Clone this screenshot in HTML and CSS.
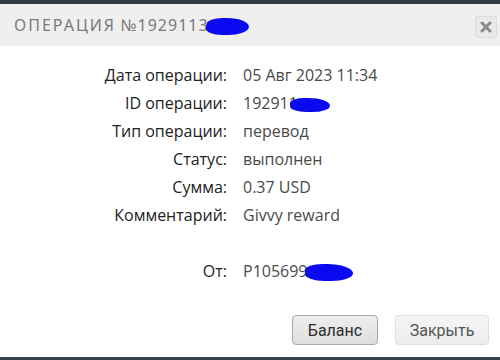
FILE: index.html
```html
<!DOCTYPE html>
<html lang="ru">
<head>
<meta charset="utf-8">
<link rel="stylesheet" href="styles.css">
</head>
<body>
<div class="topstrip"></div>
<div class="header">
  <div class="title"><span class="title-word">ОПЕРАЦИЯ</span> <span class="title-num">№1929113</span><span class="blot blot-title"></span></div>
  <div class="close"><svg width="12" height="12" viewBox="0 0 12 12"><path d="M2 2 L10 10 M10 2 L2 10" stroke="#8a8a8a" stroke-width="3" stroke-linecap="round"/></svg></div>
</div>
<div class="content">
  <div class="rows">
    <div class="label">Дата операции:</div><div class="value">05 Авг 2023 11:34</div>
    <div class="label">ID операции:</div><div class="value">192911<span class="blot blot-id"></span></div>
    <div class="label">Тип операции:</div><div class="value">перевод</div>
    <div class="label">Статус:</div><div class="value">выполнен</div>
    <div class="label">Сумма:</div><div class="value">0.37 USD</div>
    <div class="label">Комментарий:</div><div class="value">Givvy reward</div>
    <div class="label spacer"></div><div class="value spacer"></div>
    <div class="label">От:</div><div class="value">P105699<span class="blot blot-from"></span></div>
  </div>
  <div class="buttons">
    <button class="btn btn-primary">Баланс</button>
    <button class="btn btn-light">Закрыть</button>
  </div>
</div>
<div class="bottomstrip"></div>
</body>
</html>
```
FILE: styles.css
```css
* { box-sizing: border-box; }
html, body { margin: 0; padding: 0; }
body {
  width: 500px;
  height: 360px;
  background: #ffffff;
  font-family: "Open Sans", "Noto Sans", sans-serif;
  overflow: hidden;
  display: flex;
  flex-direction: column;
}
.topstrip { height: 4px; background: #2f3b40; flex: none; }
.bottomstrip { height: 3px; background: #34404a; margin-top: auto; flex: none; }
.header {
  height: 42px;
  background: #efefef;
  display: flex;
  align-items: center;
  justify-content: space-between;
  padding: 0 3px 0 14px;
  flex: none;
}
.title {
  font-family: "Noto Sans", sans-serif;
  font-size: 16px;
  color: #7a7a7a;
  white-space: nowrap;
}
.title-word { letter-spacing: 2px; }
.title-num { letter-spacing: 1px; }
.close {
  width: 22px;
  height: 22px;
  border: 1px solid #dcdcdc;
  border-radius: 3px;
  background: #e9e9e9;
  display: flex;
  align-items: center;
  justify-content: center;
  margin-top: 4px;
}
.content { padding-top: 15px; }
.rows {
  display: grid;
  grid-template-columns: 227px 1fr;
  column-gap: 16px;
  grid-auto-rows: 28px;
  font-size: 16px;
  line-height: 28px;
}
.label { text-align: right; color: #222222; font-weight: 500; }
.value { color: #4a4a4a; white-space: nowrap; }
.blot {
  display: inline-block;
  background: #0a0af0;
  vertical-align: middle;
  border-radius: 40% 60% 50% 45%;
}
.blot-title { width: 43px; height: 17px; margin-left: -3px; transform: skewX(-8deg); }
.blot-id { width: 40px; height: 14px; margin-left: -8px; }
.blot-from { width: 48px; height: 17px; margin-left: -3px; }
.buttons {
  display: flex;
  justify-content: flex-end;
  gap: 17px;
  padding-right: 11px;
  margin-top: 30px;
}
.btn {
  height: 30px;
  font-family: "Roboto", sans-serif;
  font-size: 16px;
  border-radius: 4px;
  padding: 0;
}
.btn-primary {
  width: 86px;
  background: linear-gradient(#eeeeee, #dedede);
  border: 1px solid #a9a9a9;
  color: #2e2e2e;
}
.btn-light {
  width: 94px;
  background: linear-gradient(#f5f5f5, #ececec);
  border: 1px solid #dddddd;
  color: #555555;
}
```
